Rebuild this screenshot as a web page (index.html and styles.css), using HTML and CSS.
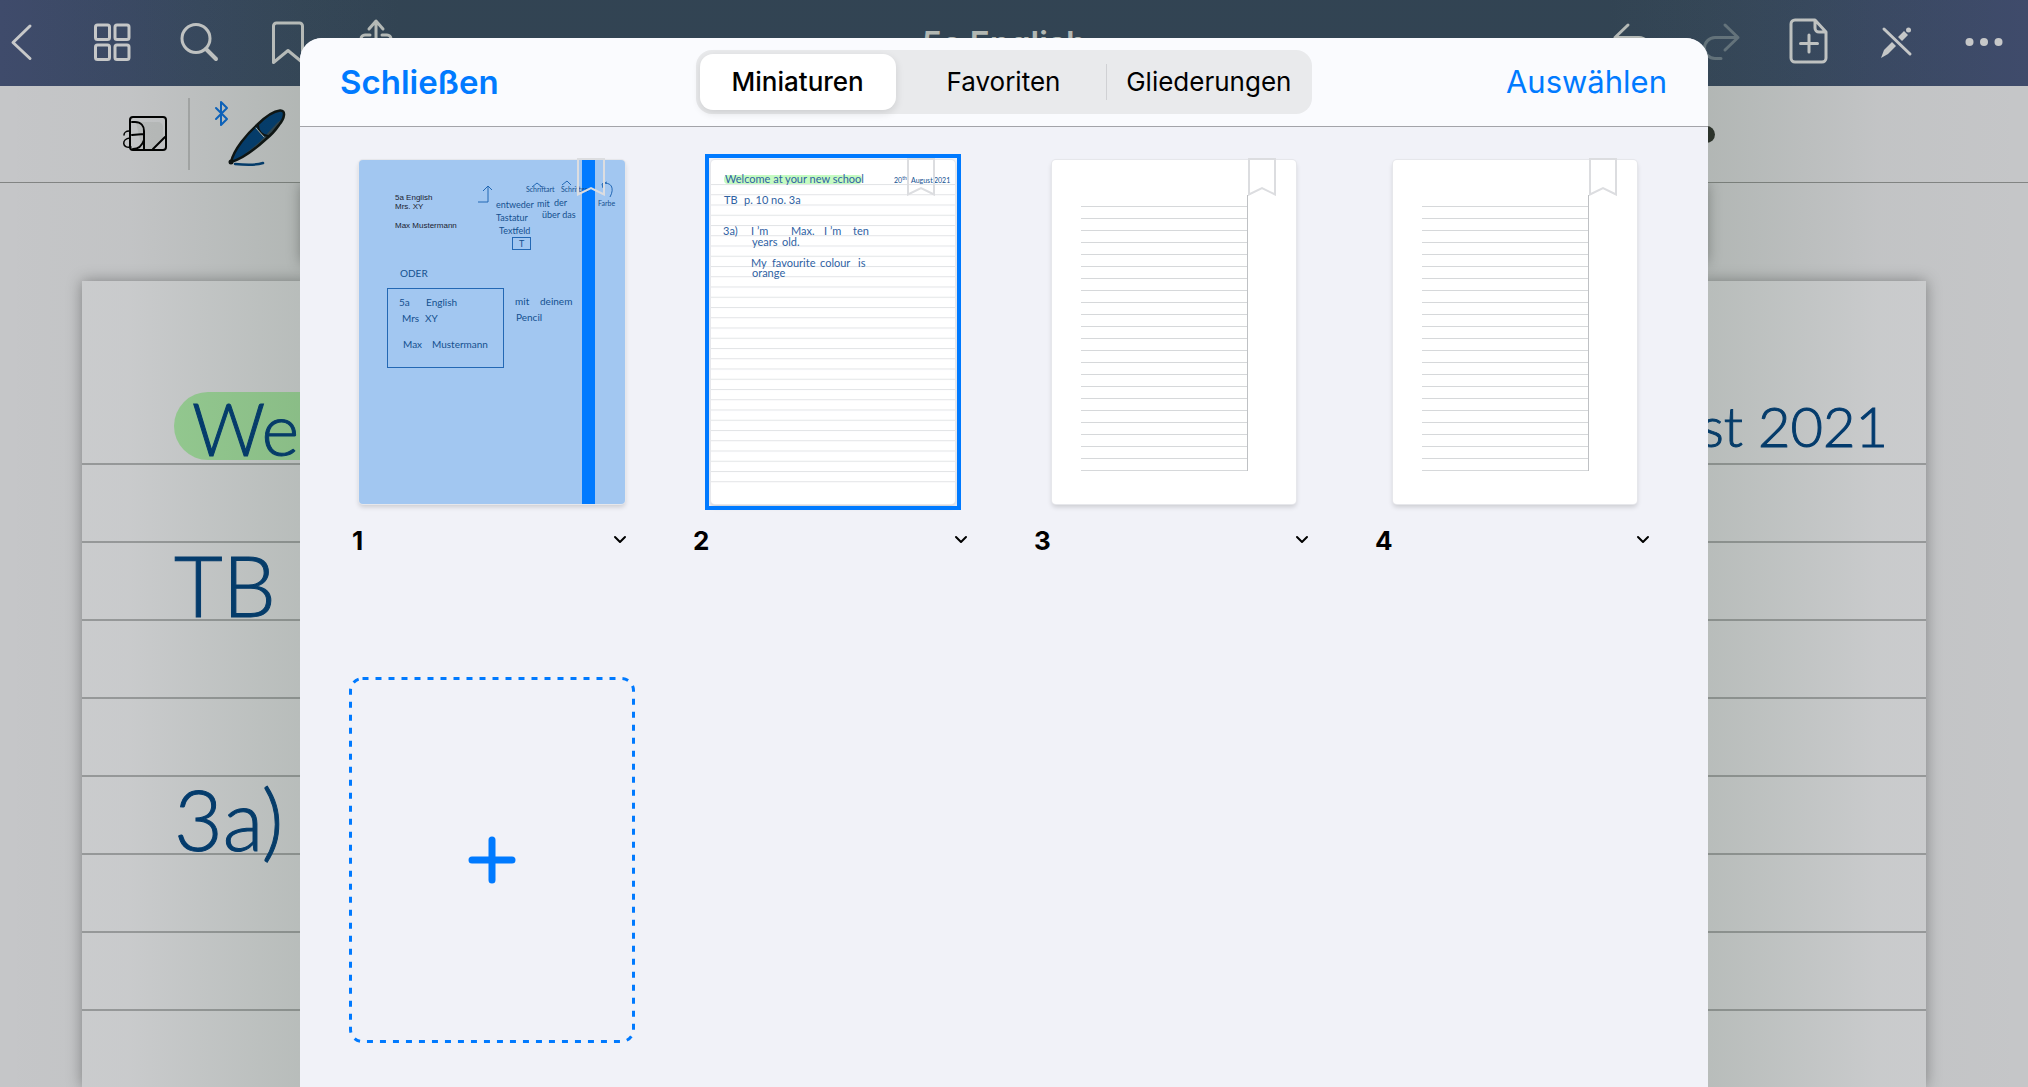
FILE: index.html
```html
<!DOCTYPE html>
<html lang="de">
<head>
<meta charset="utf-8">
<title>5a English</title>
<meta name="viewport" content="width=device-width, initial-scale=1">
<link rel="stylesheet" href="styles.css">
</head>
<body>
<div class="app">
  <header class="navbar">
    <div class="nav-group">
      <button class="icon-button" aria-label="Zurück"><svg class="icon" viewBox="0 0 48 48"><path d="M30 7 13 23.500 30 39.500"/></svg></button>
      <button class="icon-button" aria-label="Übersicht"><svg class="icon" viewBox="0 0 48 48"><rect x="7.500" y="6" width="14" height="14.500" rx="2"/><rect x="27" y="6" width="14" height="14.500" rx="2"/><rect x="7.500" y="26" width="14" height="14.500" rx="2"/><rect x="27" y="26" width="14" height="14.500" rx="2"/></svg></button>
      <button class="icon-button" aria-label="Suchen"><svg class="icon" viewBox="0 0 48 48"><circle cx="20" cy="19.500" r="14"/><path class="thick" d="M30 30 40 40"/></svg></button>
      <button class="icon-button" aria-label="Lesezeichen"><svg class="icon" viewBox="0 0 48 48"><path d="M9.500 43.500V7a3 3 0 0 1 3-3h23a3 3 0 0 1 3 3v36.500L24 31.500Z"/></svg></button>
      <button class="icon-button" aria-label="Teilen"><svg class="icon" viewBox="0 0 48 48"><path d="M24 30V3M17 10l7-8 7 8M18 16h-5a4 4 0 0 0-4 4v20h30V20a4 4 0 0 0-4-4h-5"/></svg></button>
    </div>
    <h1 class="doc-title">5a English</h1>
    <div class="nav-group">
      <button class="icon-button" aria-label="Rückgängig"><svg class="icon" viewBox="0 0 48 48"><path d="M20 6 7 18.500l13 12.500M7 18.500h24a10 10 0 0 1 0 21h-7"/></svg></button>
      <button class="icon-button muted" aria-label="Wiederholen"><svg class="icon" viewBox="0 0 48 48"><path d="M29 6 42 18.500 29 31M42 18.500H19a10.500 10.500 0 0 0 0 21h6"/></svg></button>
      <button class="icon-button" aria-label="Seite hinzufügen"><svg class="icon" viewBox="0 0 48 48"><path d="M31 1H11a4 4 0 0 0-4 4v34a4 4 0 0 0 4 4h27a4 4 0 0 0 4-4V13ZM31 1v8a4 4 0 0 0 4 4h7M25 16v17M16.500 24.500h17"/></svg></button>
      <button class="icon-button" aria-label="Nur Lesen"><svg class="icon" viewBox="0 0 48 48"><path d="M12 10 38 35"/><path class="fill" d="M9 39l3-8 8-8 4 4-8 8ZM26 18l6-6 4 4-6 6Z"/><path class="heavy" d="M36.500 11v0"/></svg></button>
      <button class="icon-button" aria-label="Mehr"><svg class="icon" viewBox="0 0 48 48"><g class="fill"><circle cx="9.500" cy="23" r="4"/><circle cx="24" cy="23" r="4"/><circle cx="38.500" cy="23" r="4"/></g></svg></button>
    </div>
  </header>

  <div class="toolbar">
    <button class="tool" aria-label="Zoomfenster"><svg width="46" height="36" viewBox="0 0 46 36" fill="none" stroke="#000" stroke-linecap="round"><path d="M14 6h22a5 5 0 0 1 5 5v14L31 33H20Z" fill="#b9bbbb" stroke="none"/><rect x="8" y="1" width="36" height="33" rx="3" stroke-width="2"/><path d="M10 6h3c6 0 9 4 9 9v18M10 19l12-1M22 24c-2 6-6 9-11 9M31 33l12-12" stroke-width="2"/><path d="M7 15c-3 0-5 2-5 4M8 22c-9 1-8 11 1 9" stroke-width="1.500"/></svg></button>
    <span class="divider"></span>
    <button class="tool" aria-label="Stift"><svg width="72" height="66" viewBox="0 0 72 66" fill="none" stroke-linecap="round" stroke-linejoin="round"><path d="M2 7l11 11-6 6V1l6 6L2 18" stroke="#0a63c4" stroke-width="2"/><path d="M17 61C20 48 33 33 43 24C51 16 60 10 66 9.500C72 9 71 17 65 24C61 30 56 35 51 39C40 49 28 58 17 61Z" fill="#003a70"/><path d="M30 53c8-5 15-11 21-18l12-13 5-4c-3 8-10 15-16 20-7 7-14 11-22 15Z" fill="#30424e"/><path d="M17 61C20 48 33 33 43 24C51 16 60 10 66 9.500C72 9 71 17 65 24C61 30 56 35 51 39C40 49 28 58 17 61Z" stroke="#0b0f10" stroke-width="2.500"/><path d="M44 24c0 6 4 10 10 11" stroke="#0b0f10" stroke-width="2"/><path d="M42 27l8 9" stroke="#b9bdb8"/><circle cx="17" cy="61" r="2.500" fill="#0b0f10"/><path d="M21 63c10 1 22 1 28-1" stroke="#003a70" stroke-width="2.500"/></svg></button>
    <span class="swatch"></span>
  </div>

  <main class="canvas">
    <div class="canvas-panel"></div>
    <article class="paper">
      <div class="line heading"><span class="marker">Welcome</span><span class="date">August 2021</span></div>
      <div class="line"></div>
      <div class="line">TB</div>
      <div class="line"></div>
      <div class="line"></div>
      <div class="line">3a)</div>
    </article>
  </main>

  <div class="overlay">
    <section class="sheet" role="dialog" aria-label="Miniaturen">
      <header class="sheet-bar">
        <button class="text-button strong">Schließen</button>
        <div class="segments">
          <button class="segment active" aria-pressed="true">Miniaturen</button>
          <button class="segment" aria-pressed="false">Favoriten</button>
          <button class="segment split" aria-pressed="false">Gliederungen</button>
        </div>
        <button class="text-button end">Auswählen</button>
      </header>

      <div class="pages">
        <div class="cell">
          <div class="preview">
            <div class="thumb cover">
              <svg class="drawing" viewBox="0 0 266 344">
                <rect class="strip" x="223" y="0" width="13" height="344"/>
                <g class="typed"><text x="36" y="40">5a English</text><text x="36" y="49">Mrs. XY</text><text x="36" y="68">Max Mustermann</text></g>
                <g class="ink">
                  <path d="M119 42h10V27M124 31l5-5 4 4M173 27l5-4 5 4M203 25l5-4 4 4M243 24c9-3 13 4 8 13M248 22l-5 2 1 4"/>
                  <rect x="153.500" y="77.500" width="18" height="12"/>
                  <rect x="28.500" y="128.500" width="116" height="79"/>
                </g>
                <g class="hand small"><text x="167" y="32">Schriftart</text><text x="202" y="32">Schriftgr.</text><text x="239" y="46">Farbe</text></g>
                <g class="hand"><text x="137" y="48">entweder</text><text x="178" y="47">mit</text><text x="195" y="46">der</text><text x="137" y="61">Tastatur</text><text x="183" y="58">über das</text><text x="140" y="74">Textfeld</text><text x="160" y="87">T</text></g>
                <g class="hand large"><text x="41" y="117">ODER</text><text x="40" y="146">5a</text><text x="67" y="146">English</text><text x="43" y="162">Mrs</text><text x="66" y="162">XY</text><text x="44" y="188">Max</text><text x="73" y="188">Mustermann</text><text x="156" y="145">mit</text><text x="181" y="145">deinem</text><text x="157" y="161">Pencil</text></g>
              </svg>
              <svg class="ribbon" viewBox="0 0 28 38"><path d="M1 1h26v35.500L14 30 1 36.500Z"/></svg>
            </div>
          </div>
          <div class="caption"><span>1</span><button class="chevron" aria-label="Optionen Seite 1"><svg width="14" height="10" viewBox="0 0 14 10"><path d="M2 2l5 5 5-5"/></svg></button></div>
        </div>

        <div class="cell">
          <div class="preview">
            <div class="thumb selected">
              <svg class="drawing" viewBox="0 0 244 344">
                <defs><pattern id="ruled" y="24" width="244" height="10.250" patternUnits="userSpaceOnUse"><rect width="244" height="1" fill="#e2e4e6"/></pattern></defs>
                <rect x="0" y="24" width="244" height="300" fill="url(#ruled)"/>
                <rect x="13" y="15" width="138" height="9" rx="4" fill="#c5fbc1"/>
                <g class="hand note"><text x="14" y="23">Welcome at your new school</text><text x="13" y="44">TB</text><text x="33" y="44">p. 10</text><text x="60" y="44">no. 3a</text><text x="12" y="75">3a)</text><text x="40" y="75">I ’m</text><text x="80" y="75">Max.</text><text x="113" y="75">I ’m</text><text x="142" y="75">ten</text><text x="41" y="86">years</text><text x="71" y="86">old.</text><text x="40" y="107">My</text><text x="61" y="107">favourite</text><text x="109" y="107">colour</text><text x="147" y="107">is</text><text x="41" y="117">orange</text></g>
                <g class="hand small"><text x="183" y="23">20<tspan dy="-3" font-size="5">th</tspan></text><text x="200" y="23">August</text><text x="223" y="23">2021</text></g>
              </svg>
              <svg class="ribbon" viewBox="0 0 28 38"><path d="M1 1h26v35.500L14 30 1 36.500Z"/></svg>
            </div>
          </div>
          <div class="caption"><span>2</span><button class="chevron" aria-label="Optionen Seite 2"><svg width="14" height="10" viewBox="0 0 14 10"><path d="M2 2l5 5 5-5"/></svg></button></div>
        </div>

        <div class="cell">
          <div class="preview">
            <div class="thumb lined">
              <div class="ruling"></div>
              <svg class="ribbon" viewBox="0 0 28 38"><path d="M1 1h26v35.500L14 30 1 36.500Z"/></svg>
            </div>
          </div>
          <div class="caption"><span>3</span><button class="chevron" aria-label="Optionen Seite 3"><svg width="14" height="10" viewBox="0 0 14 10"><path d="M2 2l5 5 5-5"/></svg></button></div>
        </div>

        <div class="cell">
          <div class="preview">
            <div class="thumb lined">
              <div class="ruling"></div>
              <svg class="ribbon" viewBox="0 0 28 38"><path d="M1 1h26v35.500L14 30 1 36.500Z"/></svg>
            </div>
          </div>
          <div class="caption"><span>4</span><button class="chevron" aria-label="Optionen Seite 4"><svg width="14" height="10" viewBox="0 0 14 10"><path d="M2 2l5 5 5-5"/></svg></button></div>
        </div>

        <button class="add-page" aria-label="Seite hinzufügen">
          <svg viewBox="0 0 286 366" preserveAspectRatio="none"><rect x="1.500" y="1.500" width="283" height="363" rx="12" stroke-width="3" stroke-dasharray="6 7"/><path d="M143 163v40M123 183h40" stroke-width="7"/></svg>
        </button>
      </div>
    </section>
  </div>
</div>
</body>
</html>
```
FILE: styles.css
```css
* {
  box-sizing: border-box;
}

body {
  margin: 0;
  font-family: Inter, "Liberation Sans", sans-serif;
  color: #000;
}

button {
  padding: 0;
  border: 0;
  background: none;
  font: inherit;
  color: inherit;
}

svg {
  display: block;
}

.app {
  position: relative;
  display: flex;
  flex-direction: column;
  height: 100vh;
  overflow: hidden;
  background: #c5c6c8;
}

/* Top navigation */

.navbar {
  display: flex;
  flex: none;
  align-items: center;
  justify-content: space-between;
  height: 86px;
  padding-right: 20px;
  background: linear-gradient(to right, #3f4b6b 0, #384860 200px, #324258 400px, #324258 calc(100% - 420px), #384860 calc(100% - 220px), #3f4b6b 100%);
}

.nav-group {
  display: flex;
  gap: 40px;
}

.icon-button {
  color: #c8c9ca;
}

.icon-button.muted {
  color: #6a7784;
}

.icon {
  width: 48px;
  height: 48px;
  overflow: visible;
  fill: none;
  stroke: currentColor;
  stroke-width: 3;
  stroke-linecap: round;
  stroke-linejoin: round;
}

.icon .thick {
  stroke-width: 4;
}

.icon .heavy {
  stroke-width: 5;
}

.icon .fill {
  fill: currentColor;
  stroke: none;
}

.doc-title {
  margin: 0;
  font-size: 33px;
  font-weight: 600;
  line-height: 48px;
  color: #c5c7c6;
}

/* Pen toolbar */

.toolbar {
  display: flex;
  flex: none;
  align-items: center;
  gap: 20px;
  height: 97px;
  padding: 0 313px 0 122px;
  border-bottom: 1px solid #828483;
}

.divider {
  width: 2px;
  height: 72px;
  background: #a7a8a9;
}

.tool:nth-of-type(2) {
  margin-left: 4px;
}

.swatch {
  width: 17px;
  height: 17px;
  margin-left: auto;
  border-radius: 50%;
  background: #2b2f2a;
}

/* Note page */

.canvas {
  display: flex;
  flex: 1;
  flex-direction: column;
  min-height: 0;
  padding: 0 102px 0 82px;
  overflow: hidden;
}

.canvas-panel {
  flex: none;
  height: 80px;
  margin: 0 220px 18px;
  box-shadow: 0 0 14px rgba(0, 0, 0, 0.4);
}

.paper {
  flex: 1;
  padding-top: 106px;
  background: repeating-linear-gradient(to bottom, transparent 0, transparent 76px, #97999a 76px, #97999a 78px) content-box, #cccdcf;
  box-shadow: 0 0 14px rgba(0, 0, 0, 0.35);
  font-family: Lato, "Open Sans", sans-serif;
  font-weight: 300;
  color: #003a70;
  -webkit-text-stroke: 1px #003a70;
}

.line {
  height: 78px;
  padding-left: 92px;
  font-size: 84px;
  line-height: 84px;
}

.heading {
  display: flex;
  align-items: center;
  justify-content: space-between;
  padding-right: 38px;
}

.marker {
  height: 68px;
  padding: 0 40px 0 18px;
  border-radius: 38px;
  background: #97cd93;
  font-size: 72px;
  line-height: 72px;
}

.date {
  font-size: 56px;
}

/* Page browser sheet */

.overlay {
  position: absolute;
  inset: 0;
  display: flex;
  padding: 38px 320px 0 300px;
  background: linear-gradient(to right, rgba(50, 80, 50, 0) 0, rgba(50, 80, 50, 0.02) 130px, rgba(50, 80, 50, 0.13) 300px, rgba(50, 80, 50, 0.13) calc(100% - 320px), rgba(50, 80, 50, 0.02) calc(100% - 150px), rgba(50, 80, 50, 0) 100%);
}

.sheet {
  flex: 1;
  overflow: hidden;
  border-radius: 22px 22px 0 0;
  background: #f1f2f8;
}

.sheet-bar {
  display: grid;
  grid-template-columns: 1fr 616px 1fr;
  align-items: center;
  height: 89px;
  padding: 0 41px 0 40px;
  border-bottom: 1px solid #a3a4a9;
  background: #fafbfe;
}

.text-button {
  justify-self: start;
  font-size: 31px;
  line-height: 40px;
  color: #007aff;
}

.text-button.strong {
  font-size: 33px;
  font-weight: 600;
}

.text-button.end {
  justify-self: end;
}

.segments {
  display: grid;
  grid-template-columns: repeat(3, 1fr);
  height: 64px;
  padding: 4px 0;
  border-radius: 16px;
  background: #e9eaec;
}

.segment {
  border-radius: 13px;
  font-size: 26px;
  line-height: 56px;
}

.segment.active {
  margin: 0 5px 0 4px;
  background: #fff;
  box-shadow: 0 3px 8px rgba(0, 0, 0, 0.12);
  font-weight: 500;
}

.segment.split {
  border-radius: 0;
  background: linear-gradient(#d0d1d4, #d0d1d4) left center / 1px 36px no-repeat;
}

.pages {
  display: grid;
  grid-template-columns: repeat(4, 1fr);
  gap: 111px 55px;
  padding: 22px 50px 22px 49px;
}

.preview {
  display: flex;
  align-items: center;
  justify-content: center;
  height: 365px;
}

.thumb {
  position: relative;
  width: 244px;
  height: 344px;
  border-radius: 4px;
  background: #fff;
  box-shadow: 0 0 0 1px #e6e7eb, 0 3px 5px rgba(0, 0, 0, 0.16);
}

.thumb.cover {
  width: 266px;
  background: #a2c7f1;
}

.thumb.selected::after {
  content: "";
  position: absolute;
  inset: -6px;
  border: 4px solid #007aff;
}

.thumb.lined {
  padding: 35px 0 0 29px;
}

.ribbon {
  position: absolute;
  top: -2px;
  right: 20px;
  width: 28px;
  height: 38px;
  fill: none;
  stroke: #dcdde0;
  stroke-width: 2;
}

.ruling {
  width: 167px;
  height: 276px;
  border-right: 1px solid #bfc1c4;
  background: repeating-linear-gradient(to bottom, transparent 0, transparent 11px, #d6d8da 11px, #d6d8da 12px);
}

.drawing {
  width: 100%;
  height: 100%;
}

.strip {
  fill: #007aff;
}

.typed {
  font-family: "Liberation Sans", Arial, sans-serif;
  font-size: 8px;
  fill: #1a2230;
}

.ink {
  fill: none;
  stroke: #2368b4;
}

.hand {
  font-family: Lato, "Open Sans", sans-serif;
  font-size: 9px;
  fill: #14508f;
}

.hand.small {
  font-size: 7px;
}

.hand.large {
  font-size: 10px;
}

.hand.note {
  font-size: 11px;
  fill: #2f62a3;
}

.caption {
  display: flex;
  align-items: center;
  justify-content: space-between;
  height: 52px;
  padding: 0 8px 0 3px;
  font-size: 26px;
  font-weight: 700;
}

.chevron {
  fill: none;
  stroke: #000;
  stroke-width: 2;
  stroke-linecap: round;
  stroke-linejoin: round;
}

.add-page {
  height: 366px;
}

.add-page svg {
  width: 100%;
  height: 100%;
  fill: none;
  stroke: #007aff;
  stroke-linecap: round;
}

.add-page rect {
  stroke-linecap: butt;
}
```
